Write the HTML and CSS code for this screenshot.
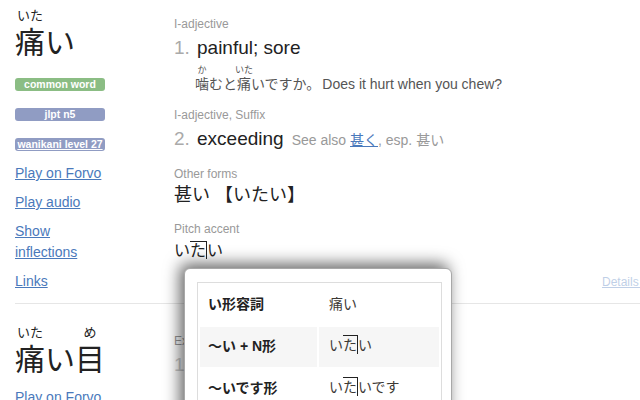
FILE: index.html
```html
<!DOCTYPE html>
<html lang="ja">
<head>
    <meta charset="UTF-8" />
    <title>痛い - Jisho</title>
    <link rel="stylesheet" href="styles.css">
</head>
<body>
<div class="page">
    <div class="entry">
        <div class="word-col">
            <div class="word">
                <span class="unit"><span class="rt">いた</span><span class="rb">痛</span></span>
                <span class="unit"><span class="rt"></span><span class="rb">い</span></span>
            </div>
            <div class="badges">
                <span class="badge common">common word</span>
                <span class="badge jlpt">jlpt n5</span>
                <a class="badge jlpt wk" href="#">wanikani level 27</a>
            </div>
            <ul class="links">
                <li><a href="#">Play on Forvo</a></li>
                <li><a href="#">Play audio</a></li>
                <li><a href="#">Show inflections</a></li>
                <li><a href="#">Links</a></li>
            </ul>
        </div>

        <div class="meanings">
            <div class="tag">I-adjective</div>
            <div class="meaning">
                <span class="num">1.</span>
                <span class="def">painful; sore</span>
            </div>
            <div class="sentence">
                <span class="unit"><span class="rt">か</span><span class="rb">噛</span></span>
                <span class="unit"><span class="rt"></span><span class="rb">むと</span></span>
                <span class="unit"><span class="rt">いた</span><span class="rb">痛</span></span>
                <span class="unit"><span class="rt"></span><span class="rb">いですか。</span></span>
                <span class="english">Does it hurt when you chew?</span>
            </div>

            <div class="tag tag-gap">I-adjective, Suffix</div>
            <div class="meaning">
                <span class="num">2.</span>
                <span class="def">exceeding</span>
                <span class="see">See also <a href="#">甚く</a>, esp. 甚い</span>
            </div>

            <div class="tag tag-gap">Other forms</div>
            <div class="forms">甚い 【いたい】</div>

            <div class="tag tag-gap">Pitch accent</div>
            <div class="pitch"><span class="mora">い</span><span class="mora high drop">た</span><span class="mora">い</span></div>

            <a class="details" href="#">Details ▸</a>
        </div>
    </div>

    <div class="entry">
        <div class="word-col">
            <div class="word">
                <span class="unit"><span class="rt">いた</span><span class="rb">痛</span></span>
                <span class="unit"><span class="rt"></span><span class="rb">い</span></span>
                <span class="unit"><span class="rt">め</span><span class="rb">目</span></span>
            </div>
            <ul class="links links-short">
                <li><a href="#">Play on Forvo</a></li>
            </ul>
        </div>

        <div class="meanings">
            <div class="tag">Expressions</div>
            <div class="meaning faded">
                <span class="num">1.</span>
                <span class="def">bitter experience</span>
            </div>
        </div>
    </div>
</div>

<!-- inflection popup, opened over the entries -->
<div class="popup">
    <table class="conj">
        <tr>
            <td class="form">い形容詞</td>
            <td class="value">痛い</td>
        </tr>
        <tr class="shaded">
            <td class="form">～い + N形</td>
            <td class="value"><span class="mora">い</span><span class="mora high drop">た</span><span class="mora">い</span></td>
        </tr>
        <tr>
            <td class="form">～いです形</td>
            <td class="value"><span class="mora">い</span><span class="mora high drop">た</span><span class="mora">いです</span></td>
        </tr>
    </table>
</div>
</body>
</html>
```

FILE: styles.css
```css
html, body {
    overflow: hidden;
}

body {
    margin: 0;
    font-family: "Liberation Sans", "Noto Sans CJK JP", sans-serif;
    color: #222;
    background: #fff;
}

a {
    color: #4a79bb;
}

.page {
    width: 648px;
    padding-top: 2px;
}

.entry {
    display: grid;
    grid-template-columns: 159px 1fr;
    margin-left: 15px;
    padding: 15px 0 11px;
    border-bottom: 1px solid #e6e6e6;
}

.entry:first-child {
    padding-top: 0;
}

/* word with furigana */
.word {
    display: flex;
}

.unit {
    display: flex;
    flex-direction: column;
    align-items: center;
}

.rt {
    display: flex;
    justify-content: center;
    width: 0;
    white-space: nowrap;
}

.word .rt {
    font-size: 13px;
    line-height: 14px;
    height: 14px;
    padding-top: 7px;
}

.word .rb {
    font-size: 30px;
    line-height: 40px;
}

.badges {
    margin-top: 15px;
    display: flex;
    flex-direction: column;
    align-items: flex-start;
    gap: 17px;
}

.badge {
    display: block;
    width: 90px;
    height: 13px;
    line-height: 13px;
    font-size: 10.5px;
    font-weight: bold;
    color: #fff;
    text-align: center;
    border-radius: 3px;
}

.common {
    background: #8bbd84;
}

.jlpt {
    background: #909cc3;
}

.links {
    list-style: none;
    margin: 12px 0 0;
    padding: 0;
    width: 95px;
    display: flex;
    flex-direction: column;
    gap: 8px;
}

.links a {
    font-size: 14px;
    line-height: 21px;
}

.links-short {
    margin-top: 7px;
}

/* meanings column */
.meanings {
    display: flex;
    flex-direction: column;
    align-items: flex-start;
    padding-top: 14px;
}

.tag {
    font-size: 12px;
    line-height: 16px;
    color: #999;
}

.tag-gap {
    margin-top: 14px;
}

.meaning {
    display: flex;
    align-items: baseline;
    margin-top: 4px;
    line-height: 24px;
}

.num {
    width: 23px;
    font-size: 19px;
    color: #aaa;
}

.def {
    font-size: 19px;
}

.see {
    margin-left: 8px;
    font-size: 14px;
    color: #999;
}

.faded .num {
    color: #ccc;
}

.sentence {
    display: flex;
    align-items: flex-end;
    margin: 5px 0 0 21px;
    color: #555;
}

.sentence .rt {
    font-size: 9px;
    line-height: 10px;
    height: 10px;
}

.sentence .rb,
.english {
    font-size: 14px;
    line-height: 18px;
}

.english {
    margin-left: 2px;
}

.forms {
    margin-top: 1px;
    font-size: 18px;
    line-height: 24px;
}

.pitch {
    margin-top: 4px;
    font-size: 16px;
    line-height: 20px;
}

.mora {
    display: inline-block;
    line-height: 17px;
    border-top: 1px solid transparent;
}

.mora.high {
    border-top-color: #222;
}

.mora.drop {
    border-right: 1px solid #222;
}

.details {
    align-self: flex-end;
    margin-top: 13px;
    font-size: 12px;
    line-height: 16px;
    opacity: 0.35;
}

/* popup */
.popup {
    position: absolute;
    left: 184px;
    top: 268px;
    width: 266px;
    height: 170px;
    background: #fff;
    border: 1px solid #a8a8a8;
    border-radius: 6px;
    box-shadow: -4px -4px 16px rgba(0, 0, 0, 0.62);
}

.conj {
    margin: 13px 0 0 12px;
    width: 245px;
    border: 1px solid #ddd;
    border-collapse: separate;
    border-spacing: 2px;
    font-size: 14px;
}

.conj td {
    box-sizing: border-box;
    height: 40px;
    padding: 0 0 5px;
}

.conj .form {
    width: 117px;
    padding-left: 8px;
    font-weight: bold;
    color: #222;
}

.conj .value {
    padding-left: 10px;
    color: #3d3a36;
}

.shaded td {
    background: #f6f6f6;
}

.conj .mora {
    line-height: 18px;
}
```
